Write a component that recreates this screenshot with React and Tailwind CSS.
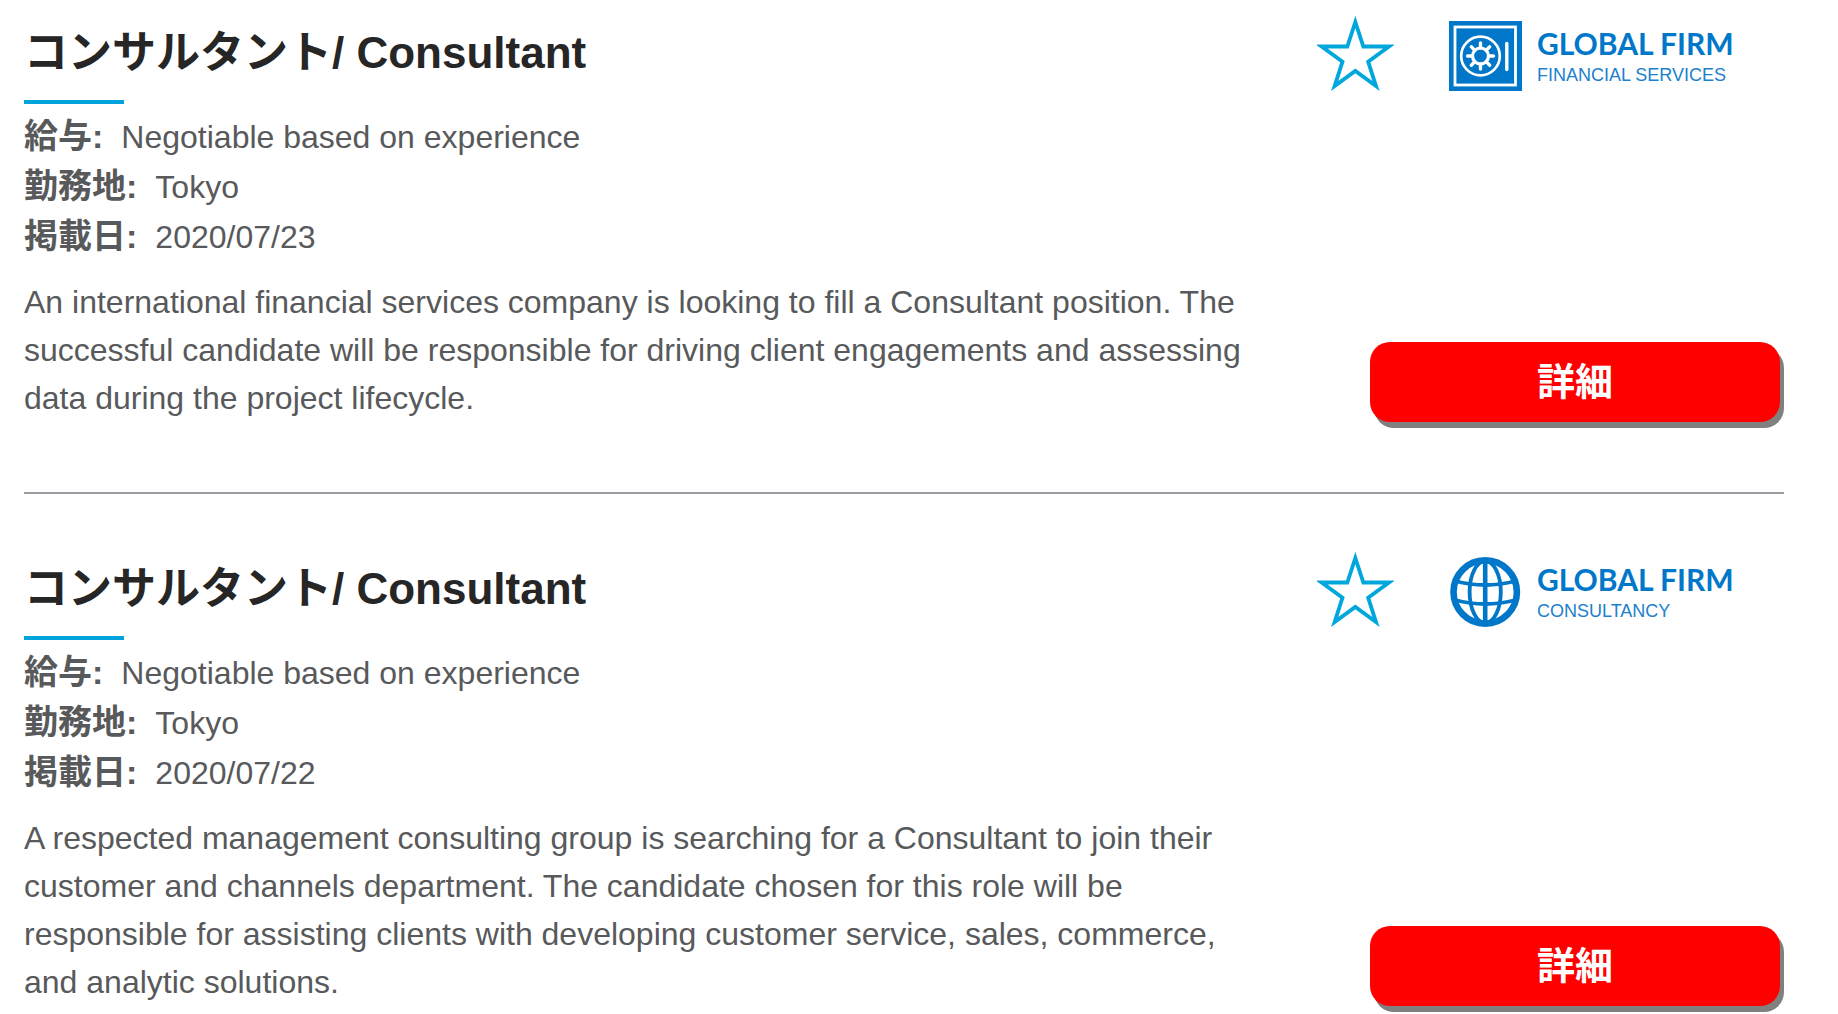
const jobs = [
  {
    id: "job-1",
    date: "2020/07/23",
    mark: "safe",
    field: "FINANCIAL SERVICES",
    text: "An international financial services company is looking to fill a Consultant position. The successful candidate will be responsible for driving client engagements and assessing data during the project lifecycle.",
  },
  {
    id: "job-2",
    date: "2020/07/22",
    mark: "globe",
    field: "CONSULTANCY",
    text: "A respected management consulting group is searching for a Consultant to join their customer and channels department. The candidate chosen for this role will be responsible for assisting clients with developing customer service, sales, commerce, and analytic solutions.",
  },
];

function Star() {
  return (
    <svg viewBox="50 46 231 225" className="h-[75px] w-[77px]" aria-hidden="true">
      <path
        fill="none"
        stroke="#00a7dc"
        strokeWidth="11.5"
        d="M165 64 189 137.500H266L203.500 183 227 256 165 210.500 103 256 126.500 183 64 137.500H141Z"
      />
    </svg>
  );
}

function Safe() {
  const teeth = [0, 45, 90, 135, 180, 225, 270, 315];
  return (
    <svg viewBox="0 0 73 70" className="h-[70px] w-[73px]" aria-hidden="true">
      <rect width="73" height="70" fill="#0077c8" />
      <g fill="none" stroke="#fff">
        <rect x="6" y="6" width="60.5" height="58" strokeWidth="2.8" />
        <circle cx="31.5" cy="35" r="19.3" strokeWidth="2.7" />
        <circle cx="31.5" cy="35" r="8" strokeWidth="3.2" />
        {teeth.map((a) => (
          <path key={a} d="M31.5 27V22" strokeWidth="3.4" strokeLinecap="round" transform={`rotate(${a} 31.5 35)`} />
        ))}
        <path d="M57.8 22.5V48.5" strokeWidth="3.4" strokeLinecap="round" />
      </g>
    </svg>
  );
}

function Globe() {
  return (
    <svg viewBox="0 0 73 70" className="h-[70px] w-[73px]" aria-hidden="true">
      <g fill="none" stroke="#0077c8" strokeWidth="3.8">
        <circle cx="36.2" cy="35" r="31.7" strokeWidth="6.6" />
        <ellipse cx="36.2" cy="35" rx="15.6" ry="31" />
        <path d="M36.2 3V67" strokeWidth="4.6" />
        <path d="M6 24Q36.2 32 66.5 24M6 43Q36.2 51 66.5 43" />
      </g>
    </svg>
  );
}

function Detail({ label, value }) {
  return (
    <div className="flex h-[50px] items-baseline gap-[18px] leading-[48px]">
      <dt className="text-[34px] font-bold">{label}:</dt>
      <dd>{value}</dd>
    </div>
  );
}

function Job({ job }) {
  return (
    <article aria-labelledby={job.id} className="flex gap-[60px] border-b-2 border-[#999da1] pb-[70px]">
      <div className="min-w-0 flex-1">
        <h2 id={job.id} className="pt-6 text-[44px] leading-[58px] font-bold text-[#262626]">
          コンサルタント/ Consultant
        </h2>
        <div className="mt-[18px] mb-2 h-1 w-[100px] bg-[#00a3dc]" />
        <dl>
          <Detail label="給与" value="Negotiable based on experience" />
          <Detail label="勤務地" value="Tokyo" />
          <Detail label="掲載日" value={job.date} />
        </dl>
        <p className="mt-4 leading-[48px]">{job.text}</p>
      </div>
      <div className="flex w-[467px] shrink-0 flex-col justify-between pt-4 pr-1">
        <div className="flex items-start gap-[55px]">
          <button type="button" aria-label="Save job">
            <Star />
          </button>
          <div className="flex gap-[15px] pt-[5px] text-[#0077c8]">
            {job.mark === "safe" ? <Safe /> : <Globe />}
            <div className="whitespace-nowrap">
              <div className="pt-1 font-['Lato'] text-[30px] leading-[36px] font-bold">GLOBAL FIRM</div>
              <div className="pt-0.5 text-[18px] leading-6 text-[#1c80cc]">{job.field}</div>
            </div>
          </div>
        </div>
        <button
          type="button"
          className="h-20 w-[410px] self-end rounded-[20px] bg-[#ff0000] text-[38px] leading-[76px] font-bold text-white shadow-[4px_6px_0_#808080]"
        >
          詳細
        </button>
      </div>
    </article>
  );
}

export default function App() {
  return (
    <main className="flex h-screen flex-col gap-[42px] overflow-hidden bg-white pr-[54px] pl-6 font-['Liberation_Sans','Noto_Sans_CJK_JP',sans-serif] text-[32px] text-[#58595b]" lang="ja">
      {jobs.map((job) => (
        <Job key={job.id} job={job} />
      ))}
    </main>
  );
}
